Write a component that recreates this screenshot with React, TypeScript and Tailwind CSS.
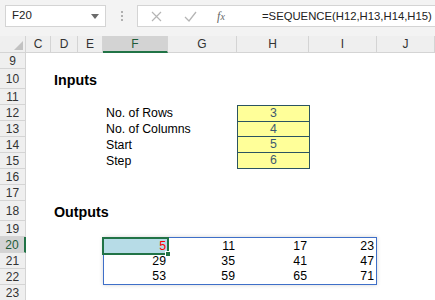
import React from "react";

const font = { fontFamily: '"Liberation Sans", Arial, sans-serif' };

const cols = ["C", "D", "E", "F", "G", "H", "I", "J"];
const rows = [9, 10, 11, 12, 13, 14, 15, 16, 17, 18, 19, 20, 21, 22, 23];

export default function App() {
  const out = [
    [5, 11, 17, 23],
    [29, 35, 41, 47],
    [53, 59, 65, 71],
  ];
  return (
    <div className="w-[435px] h-[300px] overflow-hidden bg-white text-black" style={font}>
      {/* Formula bar */}
      <div className="h-[36px] bg-[#f3f3f3] flex items-start pt-[5px] pl-[5px]">
        <div className="w-[101px] h-[22px] bg-white border border-[#d4d4d4] flex items-center pl-[6px] pr-[6px] justify-between">
          <span className="text-[11.5px] text-[#222]">F20</span>
          <svg width="8" height="5" viewBox="0 0 8 5">
            <path d="M0 0 L8 0 L4 5 Z" fill="#6b6b6b" />
          </svg>
        </div>
        <div className="w-[31px] h-[22px] flex flex-col items-center justify-center gap-[2px]">
          <div className="w-[2px] h-[2px] bg-[#b0b0b0]" />
          <div className="w-[2px] h-[2px] bg-[#b0b0b0]" />
          <div className="w-[2px] h-[2px] bg-[#b0b0b0]" />
        </div>
        <div className="flex-1 h-[22px] bg-white border border-[#d4d4d4] border-r-0 flex items-center">
          <div className="w-[36px] flex justify-center">
            <svg width="11" height="11" viewBox="0 0 11 11">
              <path d="M1 1 L10 10 M10 1 L1 10" stroke="#b5b5b5" strokeWidth="1.2" fill="none" />
            </svg>
          </div>
          <div className="w-[32px] flex justify-center">
            <svg width="13" height="11" viewBox="0 0 13 11">
              <path d="M1 6 L5 10 L12 1" stroke="#b5b5b5" strokeWidth="1.3" fill="none" />
            </svg>
          </div>
          <div className="w-[30px] flex justify-center">
            <span className="text-[12px] italic text-[#666]" style={{ fontFamily: '"Liberation Serif", serif' }}>
              f<span className="text-[10px]">x</span>
            </span>
          </div>
          <div className="w-[26px]" />
          <span className="text-[11.3px] text-[#222]">=SEQUENCE(H12,H13,H14,H15)</span>
        </div>
      </div>

      {/* Column headers */}
      <div className="grid grid-cols-[26px_25px_27px_25px_65px_69px_72px_68px_1fr] h-[17px] bg-[#efefef] leading-none">
        <div className="border-r border-b border-[#d4d4d4] relative">
          <svg className="absolute right-[2px] bottom-[2px]" width="9" height="9" viewBox="0 0 9 9">
            <path d="M9 0 L9 9 L0 9 Z" fill="#c2c2c2" />
          </svg>
        </div>
        {cols.map((c) =>
          c === "F" ? (
            <div
              key={c}
              className="bg-[#d3d3d3] border-r border-[#d4d4d4] border-b-2 border-b-[#217346] flex items-center justify-center text-[12px] text-[#1e5c38]"
            >
              {c}
            </div>
          ) : (
            <div
              key={c}
              className="border-r border-b border-[#d4d4d4] flex items-center justify-center text-[12px] text-[#333]"
            >
              {c}
            </div>
          )
        )}
      </div>

      {/* Sheet body */}
      <div className="grid grid-cols-[26px_25px_27px_25px_65px_69px_72px_68px_1fr] grid-rows-[16px_20px_16px_16px_16px_16px_16px_16px_16px_20px_16px_16px_16px_16px_16px] text-[12.3px] leading-none">
        {rows.map((r, i) =>
          r === 20 ? (
            <div
              key={r}
              className="col-start-1 bg-[#d3d3d3] border-b border-[#d4d4d4] border-r-2 border-r-[#217346] flex items-center justify-center text-[12px] text-[#1e5c38]"
              style={{ gridRow: i + 1 }}
            >
              {r}
            </div>
          ) : (
            <div
              key={r}
              className="col-start-1 bg-[#efefef] border-r border-b border-[#d4d4d4] flex items-center justify-center text-[12px] text-[#333]"
              style={{ gridRow: i + 1 }}
            >
              {r}
            </div>
          )
        )}

        <div className="col-start-3 col-span-3 row-start-2 flex items-center pt-[3px] pl-[3px] font-bold text-[14.3px] whitespace-nowrap">
          Inputs
        </div>

        {["No. of Rows", "No. of Columns", "Start", "Step"].map((t, i) => (
          <div
            key={t}
            className="col-start-5 col-span-2 flex items-center pl-[3px] whitespace-nowrap"
            style={{ gridRow: i + 4 }}
          >
            {t}
          </div>
        ))}

        <div className="col-start-7 row-start-4 row-span-4 min-h-0 grid grid-rows-4 border border-[#2b5461] bg-[#ffff99] -mr-px">
          {[3, 4, 5, 6].map((n, i) => (
            <div
              key={n}
              className={
                "min-h-0 flex items-center justify-center text-[#3d5a70]" +
                (i < 3 ? " border-b border-[#2b5461]" : "")
              }
            >
              {n}
            </div>
          ))}
        </div>

        <div className="col-start-3 col-span-3 row-start-10 flex items-center pt-[3px] pl-[3px] font-bold text-[14.3px] whitespace-nowrap">
          Outputs
        </div>

        <div className="col-start-5 col-span-4 row-start-12 row-span-3 min-h-0 relative border border-[#3e6fc8] shadow-[0_0_4px_rgba(0,0,0,0.18)] grid grid-cols-[64px_69px_72px_67px] grid-rows-3">
          {out.map((row, ri) =>
            row.map((n, ci) => (
              <div
                key={ri + "-" + ci}
                className={
                  "min-h-0 flex items-center justify-end pr-[2px] " +
                  (ri === 0 && ci === 0 ? "bg-[#b7dce7] text-[#ff0000]" : "")
                }
              >
                {n}
              </div>
            ))
          )}
          <div className="absolute left-[-2px] top-[-1px] w-[67px] h-[18px] border-2 border-[#217346] pointer-events-none">
            <div className="absolute right-[-4px] bottom-[-4px] w-[6px] h-[6px] bg-[#217346] border border-white" />
          </div>
        </div>
      </div>
    </div>
  );
}
